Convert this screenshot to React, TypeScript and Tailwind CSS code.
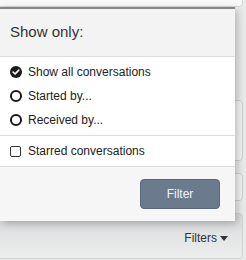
import React from "react";

function CheckedCircle() {
  return (
    <svg width="12" height="12" viewBox="0 0 12 12" className="shrink-0">
      <circle cx="6" cy="6" r="6" fill="#1a1a1a" />
      <path d="M3.2 6.2 L5.1 8 L8.8 4.2" stroke="#fff" strokeWidth="1.7" fill="none" strokeLinecap="round" strokeLinejoin="round" />
    </svg>
  );
}

function EmptyCircle() {
  return (
    <svg width="12" height="12" viewBox="0 0 12 12" className="shrink-0">
      <circle cx="6" cy="6" r="5" fill="none" stroke="#1a1a1a" strokeWidth="2" />
    </svg>
  );
}

function Box() {
  return (
    <div className="w-[11px] h-[11px] shrink-0 border border-[#333] rounded-[2px] bg-white" />
  );
}

export default function App() {
  const font = { fontFamily: '"Liberation Sans", Arial, sans-serif' };
  return (
    <div className="relative w-[246px] h-[260px] overflow-hidden bg-[#e9eaea]" style={font}>
      {/* background content */}
      <div className="absolute left-[-4px] top-[-10px] w-[247px] h-[17px] bg-[#f8f8f8] border border-[#d6d6d6] rounded-[4px]" />
      <div className="absolute left-[200px] top-[100px] w-[43px] h-[61px] bg-[#f3f3f3] border border-[#cfcfcf] rounded-[4px]" />
      <div className="absolute left-[200px] top-[173px] w-[43px] h-[28px] bg-[#f3f3f3] border border-[#cfcfcf] rounded-[4px]" />
      <div className="absolute left-[-4px] top-[213px] w-[247px] h-[46px] border border-[#cfd1d2] rounded-[4px] bg-gradient-to-b from-[#d9dbdc] to-[#eceeee] flex items-end justify-end pr-[14px] pb-[14px]">
        <span className="text-[12px] text-[#333] leading-none">Filters</span>
        <svg width="8" height="5" viewBox="0 0 8 5" className="ml-[3px] mb-[3px]">
          <path d="M0 0 H8 L4 5 Z" fill="#333" />
        </svg>
      </div>

      {/* popup */}
      <div className="absolute left-0 top-[7px] w-[235px] border-t-2 border-[#858585] shadow-[2px_3px_8px_rgba(0,0,0,0.25)] bg-white">
        <div className="h-[48px] bg-[#f3f3f3] border-b border-[#dcdcdc] flex items-center pl-[10px]">
          <span className="text-[15px] text-[#333]">Show only:</span>
        </div>
        <div className="py-[3px] border-b border-[#dcdcdc]">
          <div className="h-[24px] flex items-center gap-[6px] pl-[10px]">
            <CheckedCircle />
            <span className="text-[12px] text-[#222]">Show all conversations</span>
          </div>
          <div className="h-[24px] flex items-center gap-[6px] pl-[10px]">
            <EmptyCircle />
            <span className="text-[12px] text-[#222]">Started by...</span>
          </div>
          <div className="h-[24px] flex items-center gap-[6px] pl-[10px]">
            <EmptyCircle />
            <span className="text-[12px] text-[#222]">Received by...</span>
          </div>
        </div>
        <div className="py-[3px] border-b border-[#dcdcdc]">
          <div className="h-[24px] flex items-center gap-[7px] pl-[10px]">
            <Box />
            <span className="text-[12px] text-[#222]">Starred conversations</span>
          </div>
        </div>
        <div className="h-[54px] bg-[#f6f6f6] flex items-center justify-end pr-[15px]">
          <button className="w-[80px] h-[30px] rounded-[4px] bg-[#6c7a8d] border border-[#5b687a] text-[12px] text-[#f2f4f6]">
            Filter
          </button>
        </div>
      </div>
    </div>
  );
}
